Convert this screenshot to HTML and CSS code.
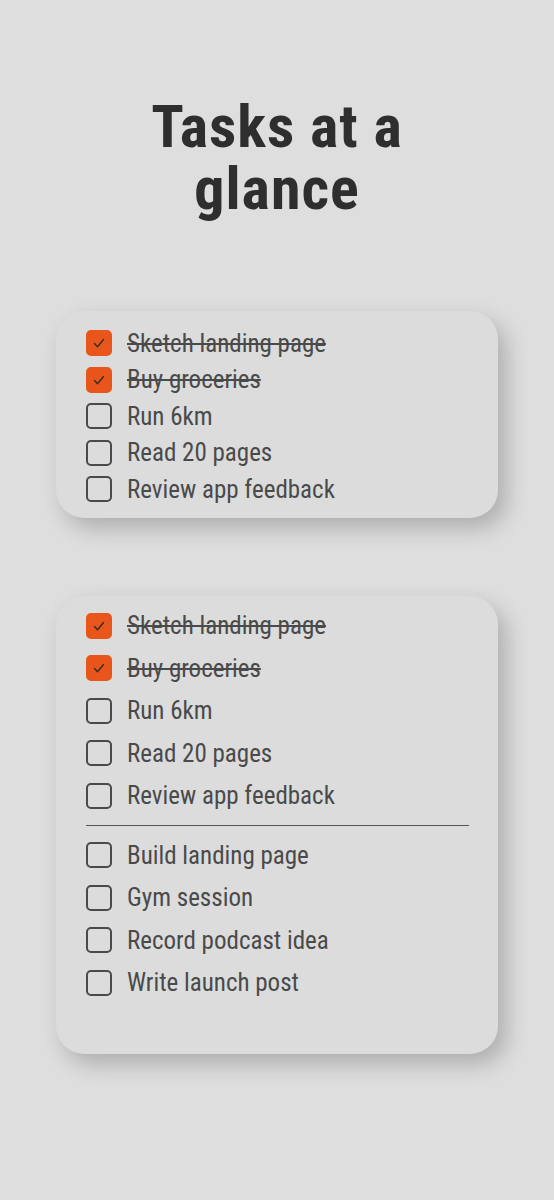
FILE: index.html
```html
<!DOCTYPE html>
<html>
<head>
    <meta charset="UTF-8">
    <link rel="stylesheet" href="styles.css">
</head>
<body>
<h1 class="title">Tasks at a<br>glance</h1>

<div class="card card-sm">
    <p class="task done"><span class="box"><svg viewBox="0 0 26 26"><path d="M8.5 13.5l3 3.2 6-7.2"/></svg></span><span class="label">Sketch landing page</span></p>
    <p class="task done"><span class="box"><svg viewBox="0 0 26 26"><path d="M8.5 13.5l3 3.2 6-7.2"/></svg></span><span class="label">Buy groceries</span></p>
    <p class="task"><span class="box"></span><span class="label">Run 6km</span></p>
    <p class="task"><span class="box"></span><span class="label">Read 20 pages</span></p>
    <p class="task"><span class="box"></span><span class="label">Review app feedback</span></p>
</div>

<div class="card card-lg">
    <p class="task done"><span class="box"><svg viewBox="0 0 26 26"><path d="M8.5 13.5l3 3.2 6-7.2"/></svg></span><span class="label">Sketch landing page</span></p>
    <p class="task done"><span class="box"><svg viewBox="0 0 26 26"><path d="M8.5 13.5l3 3.2 6-7.2"/></svg></span><span class="label">Buy groceries</span></p>
    <p class="task"><span class="box"></span><span class="label">Run 6km</span></p>
    <p class="task"><span class="box"></span><span class="label">Read 20 pages</span></p>
    <p class="task"><span class="box"></span><span class="label">Review app feedback</span></p>
    <p class="divider"></p>
    <p class="task"><span class="box"></span><span class="label">Build landing page</span></p>
    <p class="task"><span class="box"></span><span class="label">Gym session</span></p>
    <p class="task"><span class="box"></span><span class="label">Record podcast idea</span></p>
    <p class="task"><span class="box"></span><span class="label">Write launch post</span></p>
</div>
</body>
</html>
```

FILE: styles.css
```css
body,h1,p,span,div{margin: 0;padding: 0;}
body{
    background: #dedede;
    color: #4a4a4a;
    font-family: "Roboto Condensed", "Liberation Sans Narrow", "DejaVu Sans Condensed", sans-serif;
    padding: 96px 56px 60px;
}
.title{
    text-align: center;
    font-size: 60px;
    line-height: 62px;
    font-weight: 700;
    letter-spacing: 1px;
    color: #2e2e2e;
}
.card{
    background: #dcdcdc;
    border-radius: 28px;
    box-shadow: 8px 10px 22px rgba(0,0,0,0.22);
    padding: 14px 30px 10px;
}
.card-sm{margin-top: 91px;}
.card-lg{margin-top: 78px;padding: 9px 29px 50px 30px;}
.task{
    display: flex;
    align-items: center;
    gap: 15px;
    height: 36.5px;
    font-size: 25px;
}
.card-lg .task{height: 42.5px;}
.box{
    flex: none;
    width: 26px;height: 26px;
    box-sizing: border-box;
    border: 2px solid #4a4a4a;
    border-radius: 5px;
}
.box svg{display: block;width: 26px;height: 26px;margin: -2px;}
.box path{fill: none;stroke: #3a2a22;stroke-width: 1.4;stroke-linecap: round;stroke-linejoin: round;}
.done .box{background: #e8561c;border-color: #e8561c;}
.done .label{text-decoration: line-through;text-decoration-thickness: 1.5px;}
.divider{border-bottom: 1.5px solid #555;margin: 8px 0;}
```
